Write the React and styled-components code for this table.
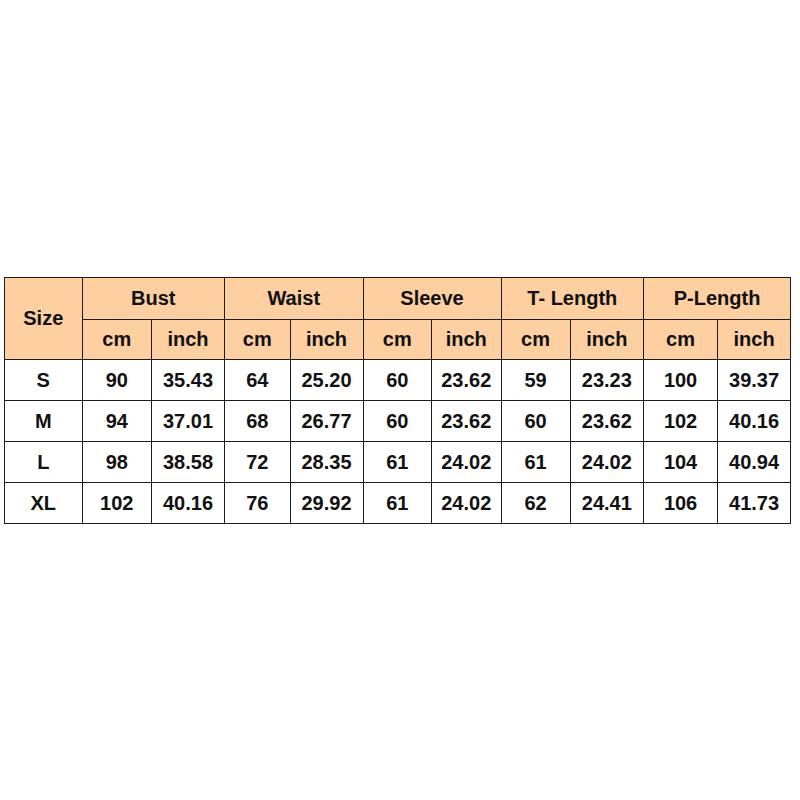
import React from 'react';
import styled, { createGlobalStyle } from "styled-components";

const GlobalStyle = createGlobalStyle`
    html, body {
        margin: 0;
        padding: 0;
        background: #fff;
    }
`

const Page = styled.div`
    width: 800px;
    height: 800px;
    box-sizing: border-box;
    padding: 277px 0 0 4px;
    background: #fff;
`

const Table = styled.table`
    border-collapse: collapse;
    table-layout: fixed;
    width: 786px;
    font-family: "Liberation Sans", Arial, sans-serif;
    font-weight: bold;
    font-size: 20px;
    color: #111;
`

const Row = styled.tr`
    height: ${props => props.h}px;
`

const Cell = styled.td`
    border: 1px solid #1c1c1c;
    padding: 0;
    text-align: center;
    vertical-align: middle;
    background: ${props => props.head ? "#fdcfa1" : "#fff"};
`

const widths = [77.5, 69.5, 73, 65.5, 73, 68.5, 69.5, 69, 73.5, 74, 73];
const groups = ["Bust", "Waist", "Sleeve", "T- Length", "P-Length"];

const rows = [
    ["S", "90", "35.43", "64", "25.20", "60", "23.62", "59", "23.23", "100", "39.37"],
    ["M", "94", "37.01", "68", "26.77", "60", "23.62", "60", "23.62", "102", "40.16"],
    ["L", "98", "38.58", "72", "28.35", "61", "24.02", "61", "24.02", "104", "40.94"],
    ["XL", "102", "40.16", "76", "29.92", "61", "24.02", "62", "24.41", "106", "41.73"],
];

const App = () => {
    return (
        <Page>
            <GlobalStyle />
            <Table>
                <colgroup>
                    {widths.map((w, i) => <col key={i} style={{ width: w }} />)}
                </colgroup>
                <tbody>
                    <Row h={42}>
                        <Cell head rowSpan={2}>Size</Cell>
                        {groups.map(g => <Cell head colSpan={2} key={g}>{g}</Cell>)}
                    </Row>
                    <Row h={40}>
                        {groups.map(g => (
                            <React.Fragment key={g}>
                                <Cell head>cm</Cell>
                                <Cell head>inch</Cell>
                            </React.Fragment>
                        ))}
                    </Row>
                    {rows.map(r => (
                        <Row h={41} key={r[0]}>
                            {r.map((v, i) => <Cell key={i}>{v}</Cell>)}
                        </Row>
                    ))}
                </tbody>
            </Table>
        </Page>
    );
}

export default App;
